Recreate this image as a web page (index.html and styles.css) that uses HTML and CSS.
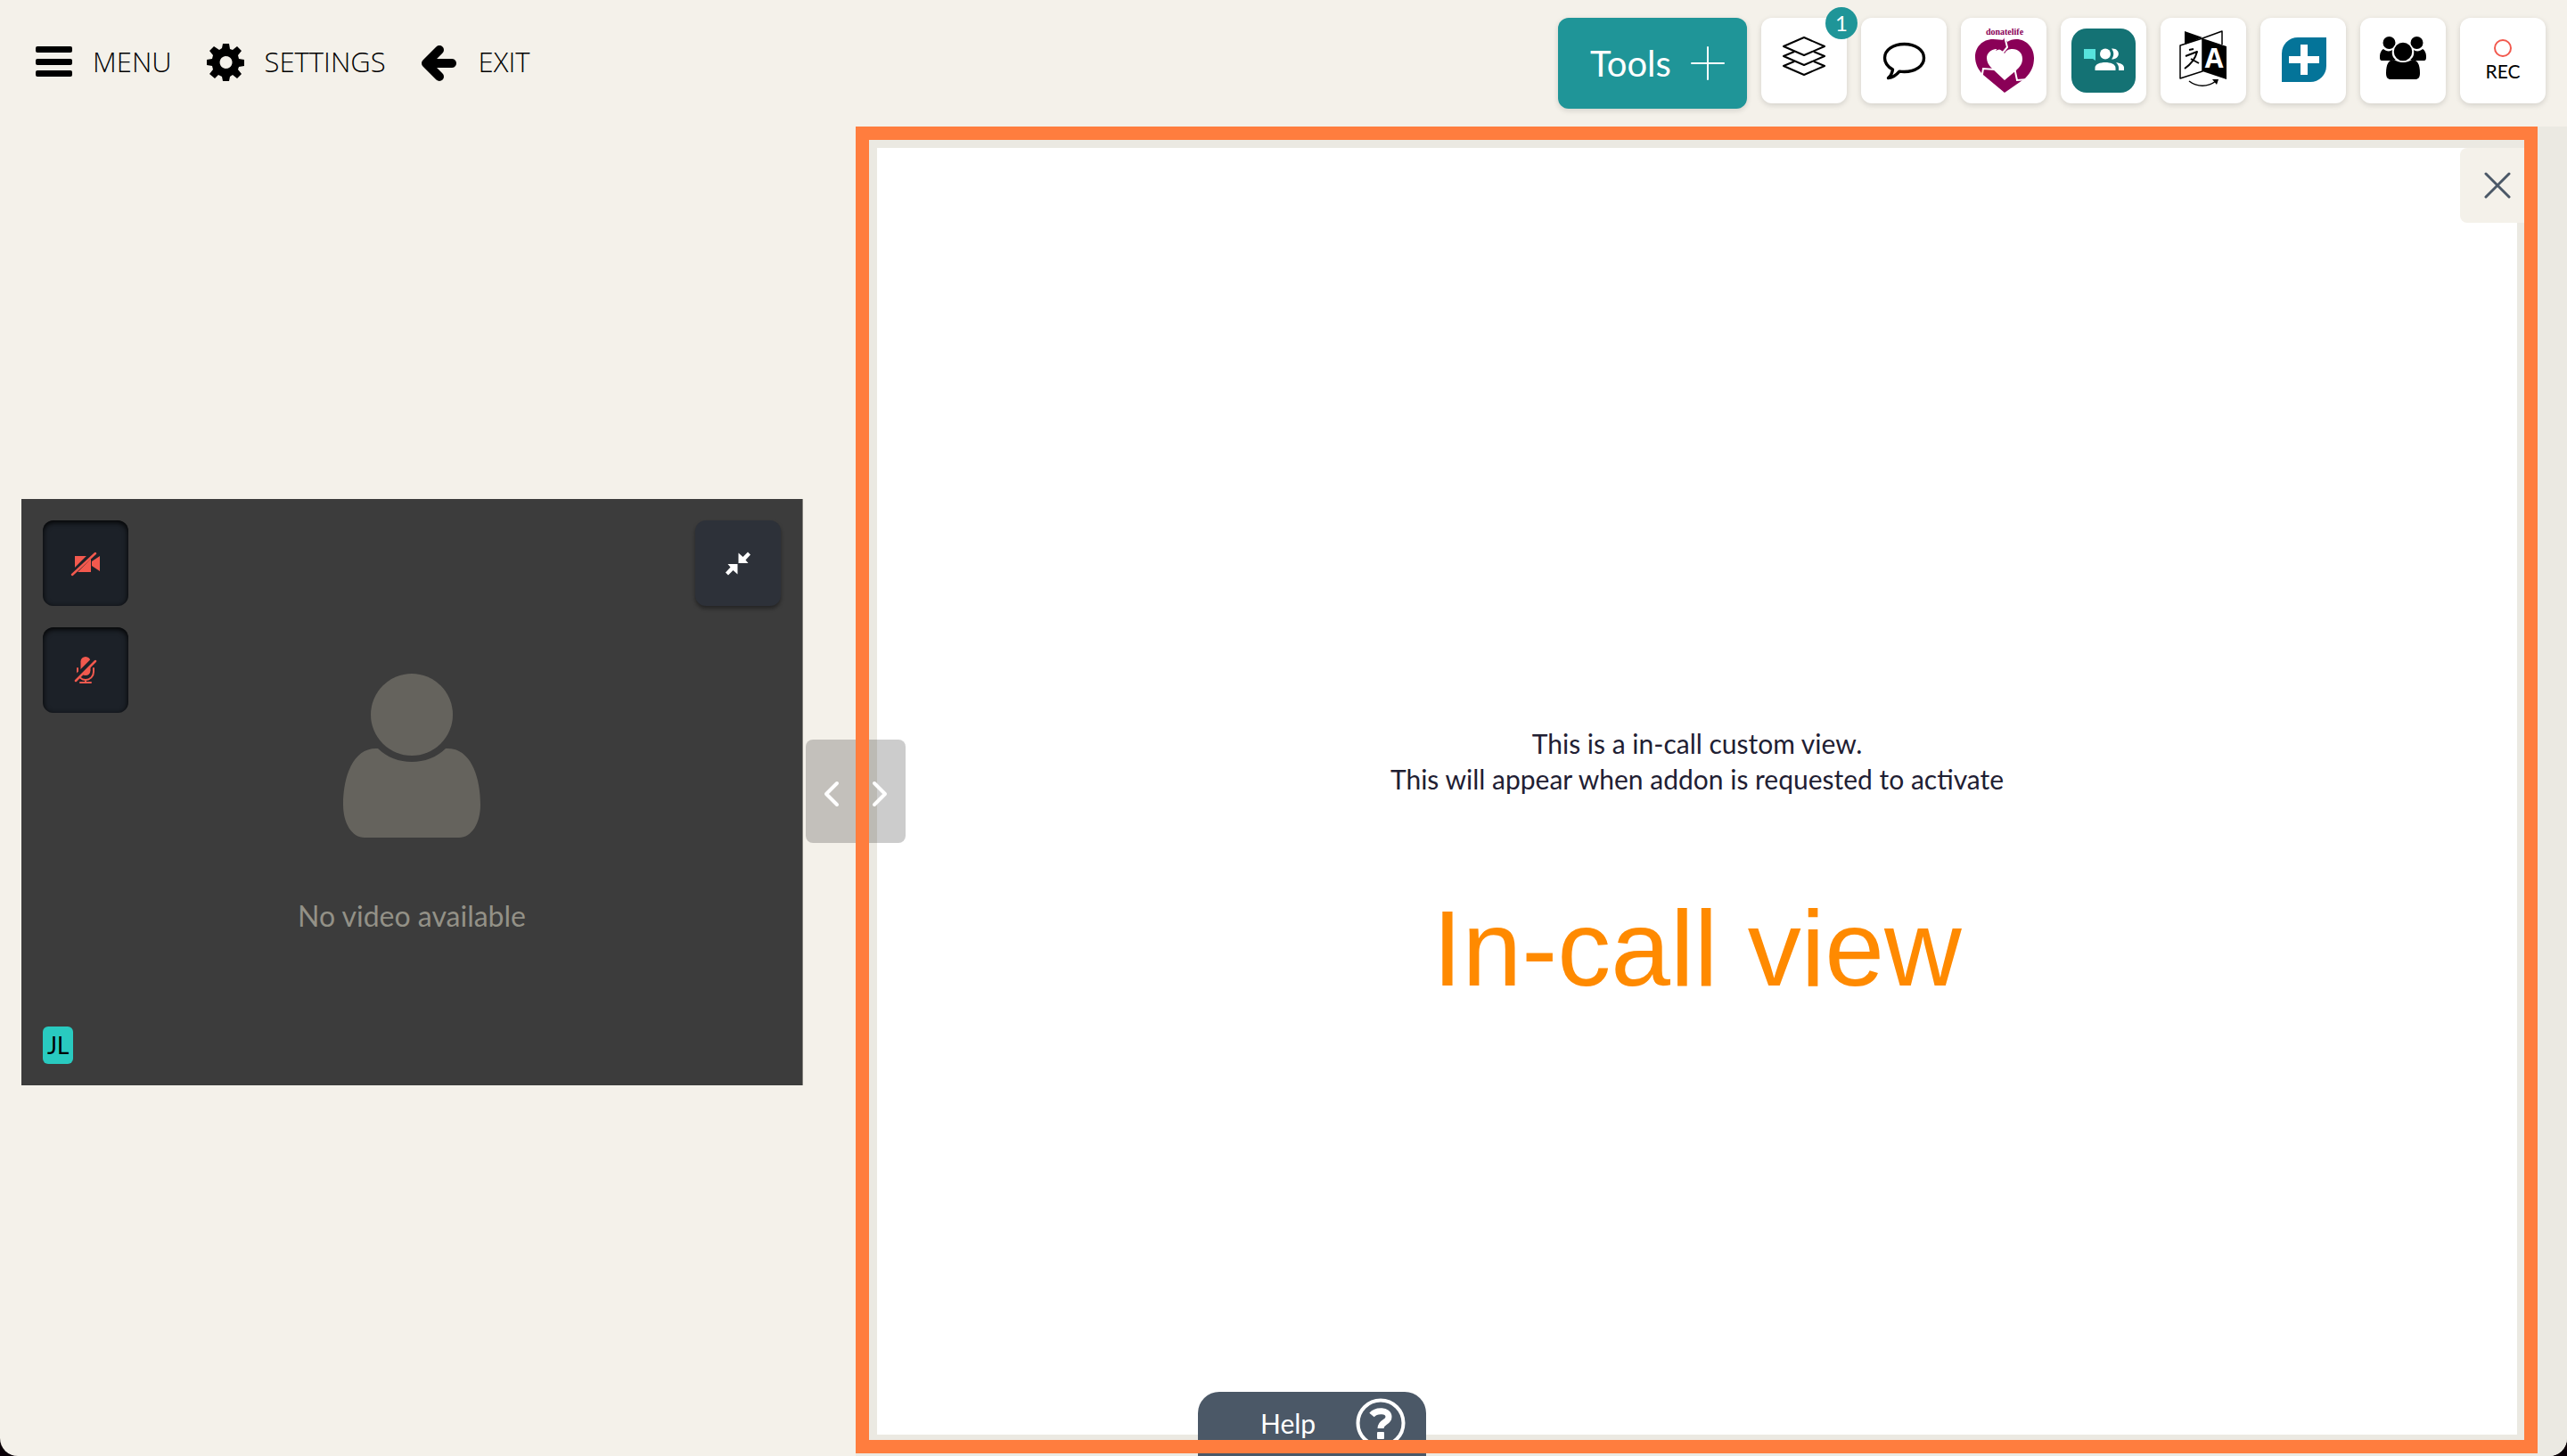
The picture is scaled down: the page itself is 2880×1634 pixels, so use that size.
FILE: index.html
```html
<!DOCTYPE html>
<html lang="en">
<head>
<meta charset="utf-8">
<meta name="viewport" content="width=device-width, initial-scale=1">
<title>In-call view</title>
<link rel="stylesheet" href="styles.css">
</head>
<body>
<div class="app">
  <header class="topbar">
    <nav class="nav" aria-label="Main">
      <button class="nav-item" type="button">
        <svg class="nav-icon" viewBox="0 0 44 44" aria-hidden="true"><rect x="2" y="5" width="41" height="7" rx="2"/><rect x="2" y="19" width="41" height="7" rx="2"/><rect x="2" y="32" width="41" height="7" rx="2"/></svg>
        MENU
      </button>
      <button class="nav-item" type="button">
        <svg class="nav-icon" viewBox="0 0 44 44" aria-hidden="true"><path fill-rule="evenodd" d="M19 2h7l1 6 3 1 5-4 5 5-4 5 1 4 6 1v7l-6 1-1 3 4 5-5 5-5-4-3 2-1 5h-7l-1-5-4-2-4 4-6-5 4-5-1-4-6-1v-6l6-1 1-4-4-5 5-5 6 4 3-2zM22.500 16a7 7 0 1 0 .1 0z"/></svg>
        SETTINGS
      </button>
      <button class="nav-item" type="button">
        <svg class="nav-icon" viewBox="0 0 44 44" aria-hidden="true"><path d="M22 9 7 24l15 15M9 24h27" fill="none" stroke="#000" stroke-width="10" stroke-linecap="round" stroke-linejoin="round"/></svg>
        EXIT
      </button>
    </nav>
    <div class="tools">
      <button class="tools-button" type="button">Tools
        <svg class="tools-plus" viewBox="0 0 40 40" aria-hidden="true"><path d="M20 2v36M2 20h36"/></svg>
      </button>
      <button class="card" type="button" aria-label="Layers">
        <svg viewBox="0 0 96 96" aria-hidden="true"><g fill="none" stroke="#000" stroke-width="2" stroke-linejoin="round"><path d="M48 22l23 10-23 10-23-10zM59 38l12 5-23 10-23-10 12-5M59 49l12 5-23 10-23-10 12-5"/></g></svg>
        <span class="badge">1</span>
      </button>
      <button class="card" type="button" aria-label="Chat">
        <svg viewBox="0 0 96 96" aria-hidden="true"><path d="M48.500 29.500c12.500 0 22 6.500 22 15.500s-9.500 15.500-22 15.500c-2 0-3.500 0-5.500-.4-3 3.600-7 6.900-12.500 7.400 3-2.500 4.500-6 5-9.500C30 55 26.500 50.500 26.500 45c0-9 9.500-15.500 22-15.500z" fill="none" stroke="#000" stroke-width="3.400" stroke-linejoin="round"/></svg>
      </button>
      <button class="card" type="button" aria-label="Donate life">
        <svg viewBox="0 0 96 96" aria-hidden="true">
          <text class="logo-text" x="49" y="19" text-anchor="middle">donatelife</text>
          <path fill="#8a0057" fill-rule="evenodd" d="M49 84 25 64C19 58 16 51 16 44c0-11 8-20 20-20 5 0 9 1 12 1l1-3 3 5c3-2 6-3 10-3 12 0 20 10 20 21 0 9-3 16-10 23zM49 70l13-11c4-4 7-7 7-13 0-7-5-11-11-11-4 0-7 1-9 5-3-4-6-5-10-5-6 1-10 5-10 10 0 4 2 8 5 11z"/>
          <path d="M39 37l7-3 5-1-2-11" fill="#8a0057"/>
          <path d="M49 21l3 12-5 6M23 69l2-12 13 1M60 56l3 14 12-1" fill="none" stroke="#fff" stroke-width="2"/>
        </svg>
      </button>
      <button class="card" type="button" aria-label="Group chat">
        <svg viewBox="0 0 96 96" aria-hidden="true"><rect x="12" y="12" width="72" height="72" rx="17" fill="#147274"/><path d="M26 35h13v13l-3-2H26z" fill="#57e3dd"/><g fill="#fff"><circle cx="50" cy="40.500" r="6"/><path d="M57 34.500c10-1 11 12 0 12 3-4 3-8 0-12zM38.500 59v-3c0-8 23-8 23 0v3zM62 50c6 1 9 3 9 6v3h-6v-3c0-2-1-4-3-6z"/></g></svg>
      </button>
      <button class="card" type="button" aria-label="Translate">
        <svg viewBox="0 0 96 96" aria-hidden="true">
          <path d="M27 15l20 7-20 8zM47 23l27 9v37l-27-9z"/>
          <g fill="none" stroke="#000" stroke-width="1.500" stroke-linejoin="round"><path d="M47 23l-25 8v37l25-8zM47 23l22-8v15"/><path d="M32 36l5-1M28 43l13-5c-2 8-7 14-14 19M34 46l9 5" stroke-width="2"/><path d="M32 71c9 7 21 7 30 0"/></g>
          <path d="M58 69h7l-2 6z"/>
          <text class="glyph-a" x="60" y="56" text-anchor="middle">A</text>
        </svg>
      </button>
      <button class="card" type="button" aria-label="Health">
        <svg viewBox="0 0 96 96" aria-hidden="true"><path d="M42 22h32v32a18 18 0 0 1-18 18H24V40a18 18 0 0 1 18-18z" fill="#047499"/><path d="M45 30h8v13h13v8H53v13h-8V51H32v-8h13z" fill="#fff"/></svg>
      </button>
      <button class="card" type="button" aria-label="Participants">
        <svg viewBox="0 0 96 96" aria-hidden="true"><circle cx="32.500" cy="28" r="7"/><circle cx="63.500" cy="28" r="7"/><path d="M26 35c3 3 8 3 10 1-1 6 1 9 4 11-3 0-4 1-5 1H25c-3 0-3-2-3-5 0-4 2-7 4-8zM70 35c-3 3-8 3-10 1 1 6-1 9-4 11 3 0 4 1 5 1h10c3 0 3-2 3-5 0-4-2-7-4-8z"/><path d="M38 47c6 4 14 4 20 0 6 0 9 5 9 15 0 5-2 7-5 7H34c-3 0-5-2-5-7 0-10 3-15 9-15z"/><circle cx="48" cy="38" r="11" stroke="#fff" stroke-width="1.500"/></svg>
      </button>
      <button class="card rec" type="button"><span class="rec-dot"></span>REC</button>
    </div>
  </header>

  <main class="stage">
    <section class="self" aria-label="Your video">
      <div class="video">
        <div class="video-side">
          <div class="video-controls">
            <button class="control muted" type="button" aria-label="Turn camera on">
              <svg viewBox="0 0 96 96" aria-hidden="true"><g fill="#f2594e"><path d="M36 40h18v18H36zM55 46l9-6v17l-9-6z"/></g><path d="M32 61 57 36" stroke="#1c2128" stroke-width="6"/><path d="M33 61 59 37" stroke="#f2594e" stroke-width="2.500" stroke-linecap="round"/></svg>
            </button>
            <button class="control muted" type="button" aria-label="Turn microphone on">
              <svg viewBox="0 0 96 96" aria-hidden="true"><rect x="42.500" y="33" width="11" height="21" rx="5.500" fill="#f2594e"/><path d="M39 46v4a9 9 0 0 0 18 0v-4M48 59v3M42 62h12" fill="none" stroke="#f2594e" stroke-width="2" stroke-linecap="round"/><path d="M35 58 57 36" stroke="#1c2128" stroke-width="5"/><path d="M37 60 59 38" stroke="#f2594e" stroke-width="2.500" stroke-linecap="round"/></svg>
            </button>
          </div>
          <span class="initials">JL</span>
        </div>
        <div class="placeholder">
          <svg class="avatar" viewBox="0 0 154 184" aria-hidden="true"><circle cx="77" cy="46" r="46"/><path d="M39 84c20 20 56 20 76 0 27-2 39 30 39 63 0 21-10 37-24 37H24C10 184 0 168 0 147c0-33 12-65 39-63z"/></svg>
          <p>No video available</p>
        </div>
        <div class="video-side">
          <button class="control" type="button" aria-label="Shrink video">
            <svg viewBox="0 0 96 96" aria-hidden="true"><path d="M48.500 36.500V48h11l-3-3.500 5.500-6-3-3-5.500 5.500zM47.500 60.500V49h-11l3 3.500-5.500 6 3 3 5.500-5.500z" fill="#fff"/></svg>
          </button>
        </div>
      </div>
    </section>

    <section class="panel" aria-label="In-call custom view">
      <div class="view">
        <button class="close" type="button" aria-label="Close">
          <svg viewBox="0 0 84 84" aria-hidden="true"><path d="M29 29l26 26M55 29 29 55"/></svg>
        </button>
        <p class="view-text">This is a in-call custom view.<br>This will appear when addon is requested to activate</p>
        <h1 class="view-title">In-call view</h1>
      </div>
      <div class="frame"></div>
    </section>

    <div class="splitter">
      <button type="button" aria-label="Shrink left"><svg viewBox="0 0 56 116" aria-hidden="true"><path d="M35 49 23 61l12 12"/></svg></button>
      <button type="button" aria-label="Shrink right"><svg viewBox="0 0 56 116" aria-hidden="true"><path d="M21 49l12 12-12 12"/></svg></button>
    </div>
  </main>

  <button class="help" type="button">Help
    <svg viewBox="0 0 56 56" aria-hidden="true"><circle cx="28" cy="28" r="25.500" fill="none" stroke="#fff" stroke-width="4"/><path d="M18 19c5-6 19-6 19 2 0 7-9 5-9 13" fill="none" stroke="#fff" stroke-width="7"/><rect x="24" y="38" width="8" height="8" rx="1" fill="#fff"/></svg>
  </button>
</div>
</body>
</html>
```
FILE: styles.css
```css
* { box-sizing: border-box; }

body {
  margin: 0;
  background: #0a0006;
  color: #000;
  font-family: Lato, "Open Sans", sans-serif;
  font-size: 30px;
  line-height: 40px;
}

button {
  margin: 0;
  padding: 0;
  border: 0;
  background: none;
  color: inherit;
  font: inherit;
  cursor: pointer;
}

svg { display: block; }
p, h1 { margin: 0; }

.app {
  position: relative;
  display: flex;
  flex-direction: column;
  min-height: 100vh;
  overflow: hidden;
  border-radius: 0 0 20px 20px;
  background: #f4f1ea;
}

/* Top bar */
.topbar {
  display: flex;
  justify-content: space-between;
  padding: 20px 24px 20px 38px;
}

.nav {
  display: flex;
  align-items: center;
  gap: 38px;
  height: 98px;
}

.nav-item {
  display: flex;
  align-items: center;
  gap: 22px;
  font-family: "Open Sans", sans-serif;
  font-size: 31px;
  font-weight: 300;
}

.nav-icon { width: 44px; height: 44px; }

.tools {
  display: flex;
  align-items: flex-start;
  gap: 16px;
}

.tools-button {
  display: flex;
  align-items: center;
  justify-content: space-between;
  width: 212px;
  height: 102px;
  padding: 0 24px 0 36px;
  border-radius: 12px;
  background: #1f9598;
  color: #fff;
  font-size: 40px;
  box-shadow: 0 2px 6px rgba(0, 0, 0, .14);
}

.tools-plus {
  width: 40px;
  height: 40px;
  fill: none;
  stroke: #fff;
  stroke-width: 2;
  stroke-linecap: round;
}

.card {
  position: relative;
  width: 96px;
  height: 96px;
  border-radius: 12px;
  background: #fff;
  box-shadow: 0 2px 6px rgba(0, 0, 0, .14);
}

.badge {
  position: absolute;
  top: -12px;
  right: -12px;
  width: 36px;
  height: 36px;
  border-radius: 50%;
  background: #1f9598;
  color: #fff;
  font-size: 24px;
  line-height: 36px;
}

.logo-text {
  fill: #8a0057;
  font: bold 10px "Liberation Serif", serif;
}

.glyph-a {
  fill: #fff;
  font: bold 30px "Open Sans", sans-serif;
}

.rec {
  display: flex;
  flex-direction: column;
  align-items: center;
  gap: 2px;
  padding-top: 24px;
  font-size: 21px;
  line-height: 28px;
}

.rec-dot {
  width: 20px;
  height: 20px;
  border: 2px solid #f2594e;
  border-radius: 50%;
}

/* Stage */
.stage {
  position: relative;
  display: grid;
  grid-template-columns: 1fr 2fr;
  flex: 1;
}

.self {
  display: flex;
  align-items: center;
  padding: 2px 59px 0 24px;
}

.video {
  display: grid;
  grid-template-columns: 96px 1fr 96px;
  flex: 1;
  aspect-ratio: 4 / 3;
  padding: 24px;
  border-right: 1px solid #85847f;
  background: #3c3c3c;
}

.video-side {
  display: flex;
  flex-direction: column;
  align-items: flex-start;
  justify-content: space-between;
}

.video-controls {
  display: grid;
  gap: 24px;
}

.control {
  width: 96px;
  height: 96px;
  border-radius: 12px;
  background: #2d3139;
  box-shadow: 0 3px 4px rgba(0, 0, 0, .4);
}

.control.muted {
  background: #1c2128;
  box-shadow: inset 0 2px 6px #000;
}

.initials {
  padding: 0 5px;
  border-radius: 6px;
  background: #29cac0;
  font-size: 26px;
  line-height: 42px;
}

.placeholder {
  display: flex;
  flex-direction: column;
  align-items: center;
  justify-content: center;
  gap: 64px;
  padding-top: 30px;
  color: #939187;
  font-size: 32px;
  line-height: 48px;
}

.avatar {
  width: 154px;
  height: 184px;
  fill: #65635d;
}

.panel {
  position: relative;
  display: flex;
  padding: 24px 56px 24px 24px;
  background: #ebe9e2;
}

.view {
  position: relative;
  display: flex;
  flex-direction: column;
  align-items: center;
  justify-content: center;
  gap: 110px;
  flex: 1;
  padding-top: 162px;
  background: #fff;
}

.close {
  position: absolute;
  top: 0;
  right: -20px;
  width: 84px;
  height: 84px;
  border-radius: 8px;
  background: #f4f1ea;
}

.close path {
  fill: none;
  stroke: #4b5867;
  stroke-width: 3;
  stroke-linecap: round;
}

.view-text {
  color: #1f2033;
  text-align: center;
}

.view-title {
  color: #ff8a00;
  font: 400 120px/120px "Liberation Sans", Arial, sans-serif;
}

.frame {
  position: absolute;
  inset: 0 33px 3px 0;
  z-index: 3;
  border: 15px solid #ff7d3e;
  pointer-events: none;
}

.splitter {
  position: absolute;
  top: 50%;
  left: calc(100% / 3);
  display: flex;
  margin: -58px 0 0 -56px;
  border-radius: 8px;
  background: rgba(0, 0, 0, .2);
}

.splitter svg {
  width: 56px;
  height: 116px;
  fill: none;
  stroke: #fff;
  stroke-width: 4;
  stroke-linecap: round;
  stroke-linejoin: round;
}

/* Help tab on the bottom edge */
.help {
  position: absolute;
  bottom: 0;
  left: calc(50% - 96px);
  z-index: 2;
  display: flex;
  align-items: center;
  justify-content: space-between;
  width: 256px;
  height: 72px;
  padding: 0 23px 3px 70px;
  border-radius: 24px 24px 0 0;
  background: #4b5867;
  color: #fff;
}

.help svg { width: 56px; height: 56px; }
```
